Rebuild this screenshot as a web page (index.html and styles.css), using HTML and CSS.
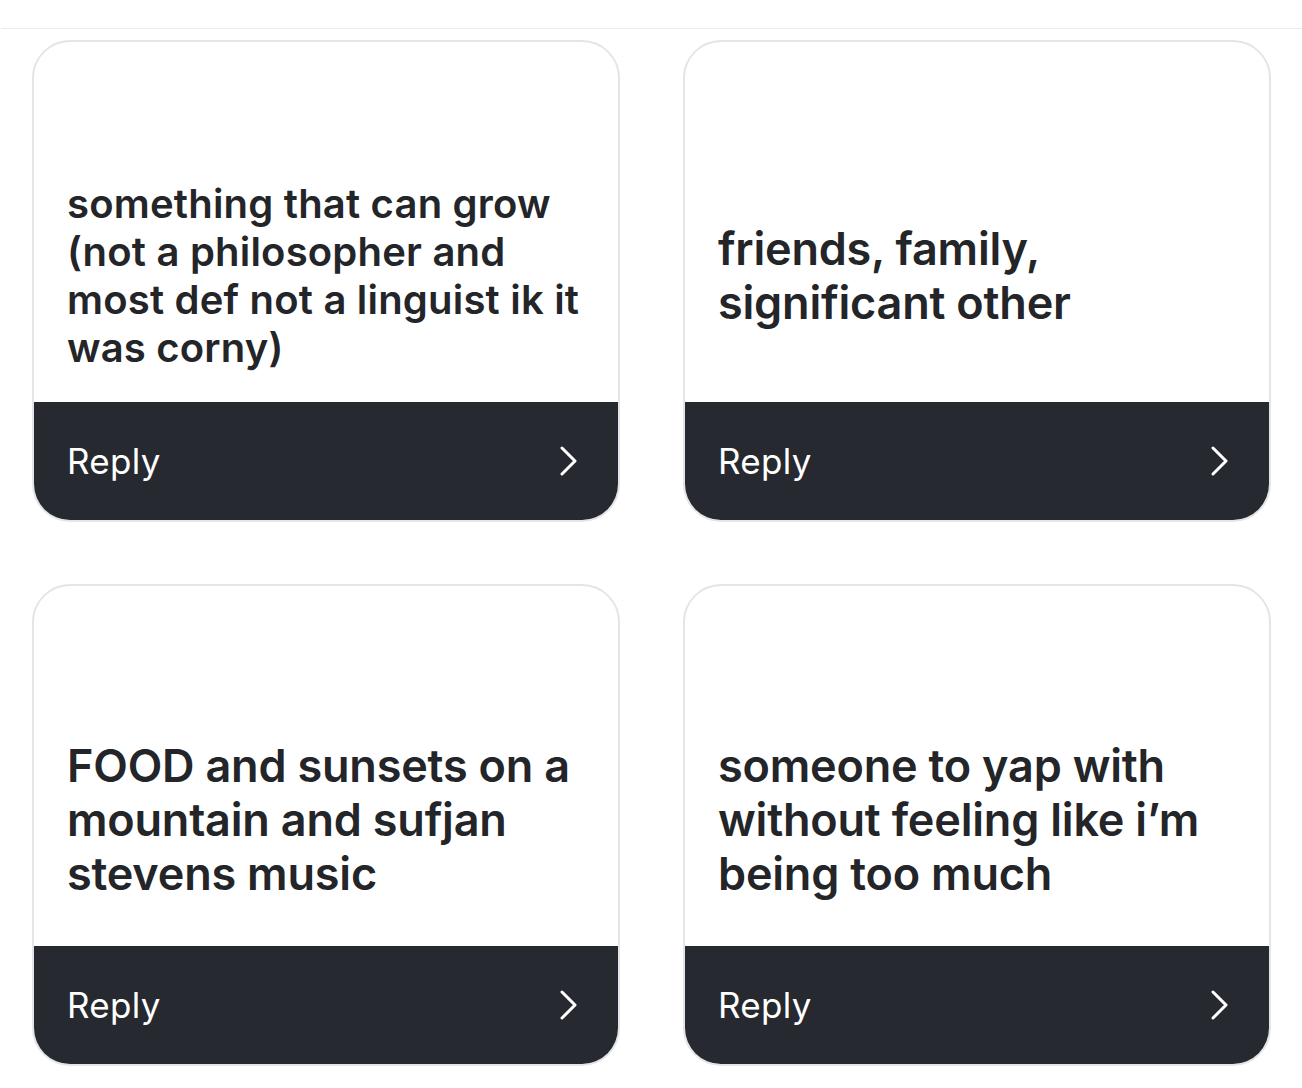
FILE: index.html
```html
<!DOCTYPE html>
<html lang="en">
<head>
<meta charset="utf-8">
<title>Replies</title>
<link rel="stylesheet" href="styles.css">
</head>
<body>
<header class="topbar"></header>
<main class="grid">
  <article class="card">
    <div class="card-head"></div>
    <div class="card-body"><p class="answer answer-small">something that can grow (not a philosopher and most def not a linguist ik it was corny)</p></div>
    <a class="card-foot" href="#"><span class="reply">Reply</span><svg class="chev" width="17" height="30" viewBox="0 0 17 30"><polyline points="2,2 15,15 2,28" fill="none" stroke="#fff" stroke-width="3" stroke-linecap="round" stroke-linejoin="round"/></svg></a>
  </article>
  <article class="card">
    <div class="card-head"></div>
    <div class="card-body"><p class="answer">friends, family, significant other</p></div>
    <a class="card-foot" href="#"><span class="reply">Reply</span><svg class="chev" width="17" height="30" viewBox="0 0 17 30"><polyline points="2,2 15,15 2,28" fill="none" stroke="#fff" stroke-width="3" stroke-linecap="round" stroke-linejoin="round"/></svg></a>
  </article>
  <article class="card">
    <div class="card-head"></div>
    <div class="card-body"><p class="answer">FOOD and sunsets on a mountain and sufjan stevens music</p></div>
    <a class="card-foot" href="#"><span class="reply">Reply</span><svg class="chev" width="17" height="30" viewBox="0 0 17 30"><polyline points="2,2 15,15 2,28" fill="none" stroke="#fff" stroke-width="3" stroke-linecap="round" stroke-linejoin="round"/></svg></a>
  </article>
  <article class="card">
    <div class="card-head"></div>
    <div class="card-body"><p class="answer">someone to yap with without feeling like i’m being too much</p></div>
    <a class="card-foot" href="#"><span class="reply">Reply</span><svg class="chev" width="17" height="30" viewBox="0 0 17 30"><polyline points="2,2 15,15 2,28" fill="none" stroke="#fff" stroke-width="3" stroke-linecap="round" stroke-linejoin="round"/></svg></a>
  </article>
</main>
</body>
</html>
```

FILE: styles.css
```css
* { box-sizing: border-box; }
html, body {
  margin: 0;
  padding: 0;
  background: #ffffff;
  font-family: Inter, "Noto Sans", "Liberation Sans", sans-serif;
  color: #232529;
}
.topbar {
  height: 29px;
  border-bottom: 1px solid #ebecee;
  margin-left: 1px;
}
.grid {
  display: grid;
  grid-template-columns: 588px 588px;
  column-gap: 63px;
  row-gap: 62px;
  padding: 11px 31px 0 32px;
}
.card {
  height: 482px;
  border: 2px solid #e4e5e8;
  border-radius: 38px;
  overflow: hidden;
  display: flex;
  flex-direction: column;
  background: #fff;
}
.card-head {
  height: 107px;
  flex: none;
}
.card-body {
  flex: 1;
  display: flex;
  align-items: center;
  padding: 0 33px;
}
.answer {
  margin: 0;
  font-weight: 600;
  font-size: 45px;
  line-height: 54px;
  letter-spacing: -0.2px;
}
.answer-small {
  font-size: 40px;
  line-height: 48px;
  letter-spacing: 0.2px;
}
.card-foot {
  flex: none;
  height: 118px;
  background: #26292f;
  display: flex;
  align-items: center;
  justify-content: space-between;
  padding: 0 41px 0 33px;
  text-decoration: none;
  color: #fff;
}
.reply {
  font-size: 35px;
  font-weight: 400;
  letter-spacing: 0.3px;
}
.chev { display: block; }
```
